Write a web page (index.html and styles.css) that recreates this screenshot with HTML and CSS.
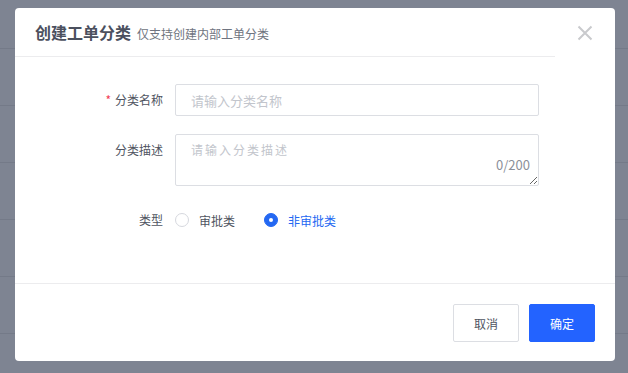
FILE: index.html
```html
<!DOCTYPE html>
<html lang="zh-CN">
<head>
    <meta charset="UTF-8">
    <meta name="viewport" content="width=device-width, initial-scale=1.0">
    <title>创建工单分类</title>
    <link rel="stylesheet" href="styles.css">
</head>
<body>
    <div class="modal">
        <div class="modal-header">
            <div class="modal-title">
                <span class="title-main">创建工单分类</span>
                <span class="title-sub">仅支持创建内部工单分类</span>
            </div>
            <div class="modal-close">
                <svg width="16" height="16" viewBox="0 0 16 16">
                    <path d="M1.5 1.5 L14.5 14.5 M14.5 1.5 L1.5 14.5" stroke="#c9cacd" stroke-width="2" fill="none"/>
                </svg>
            </div>
        </div>

        <div class="modal-body">
            <div class="form-row">
                <label class="form-label" for="name"><span class="required">*</span>分类名称</label>
                <input class="form-input" type="text" id="name" placeholder="请输入分类名称">
            </div>
            <div class="form-row">
                <label class="form-label" for="desc">分类描述</label>
                <div class="textarea-wrap">
                    <textarea class="form-textarea" id="desc" placeholder="请输入分类描述"></textarea>
                    <span class="counter">0/200</span>
                </div>
            </div>
            <div class="form-row radio-row">
                <span class="form-label">类型</span>
                <label class="radio">
                    <span class="radio-dot"></span>
                    <span>审批类</span>
                </label>
                <label class="radio checked">
                    <span class="radio-dot"></span>
                    <span>非审批类</span>
                </label>
            </div>
        </div>

        <div class="modal-footer">
            <button class="btn">取消</button>
            <button class="btn btn-primary">确定</button>
        </div>
    </div>
</body>
</html>
```

FILE: styles.css
```css
body {
    margin: 0;
    height: 373px;
    overflow: hidden;
    font-family: "Noto Sans CJK SC", "Noto Sans", sans-serif;
    background-color: #7e8492;
    background-image: repeating-linear-gradient(to bottom, transparent 0, transparent 48px, #747a88 48px, #747a88 49px, transparent 49px, transparent 57px);
    background-position: 0 0;
    padding-top: 8px;
    box-sizing: border-box;
}
.modal {
    margin-left: 15px;
    width: 600px;
    height: 353px;
    background: #fff;
    border-radius: 4px;
    display: flex;
    flex-direction: column;
}
.modal-header {
    display: flex;
    height: 49px;
}
.modal-title {
    width: 520px;
    padding-left: 20px;
    border-bottom: 1px solid #ececee;
    display: flex;
    align-items: center;
    gap: 6px;
}
.title-main {
    font-size: 16px;
    font-weight: bold;
    color: #4b505e;
}
.title-sub {
    font-size: 12px;
    color: #6f7480;
    padding-top: 2px;
}
.modal-close {
    flex: 1;
    display: flex;
    align-items: center;
    justify-content: flex-end;
    padding-right: 22px;
    padding-top: 1px;
}
.modal-body {
    flex: 1;
    padding-top: 27px;
    border-bottom: 1px solid #ececee;
}
.form-row {
    display: flex;
    align-items: flex-start;
    margin-bottom: 18px;
}
.form-label {
    width: 148px;
    text-align: right;
    padding-right: 12px;
    font-size: 12px;
    color: #4f5461;
    line-height: 32px;
    flex-shrink: 0;
}
.required {
    color: #f23c57;
    margin-right: 4px;
}
.form-input {
    width: 364px;
    height: 32px;
    box-sizing: border-box;
    border: 1px solid #dcdee3;
    border-radius: 2px;
    padding: 0 15px;
    font-family: inherit;
    font-size: 13px;
    outline: none;
}
.form-input::placeholder {
    color: #c2c5cc;
}
.textarea-wrap {
    position: relative;
    width: 364px;
    height: 52px;
}
.form-textarea {
    width: 100%;
    height: 100%;
    box-sizing: border-box;
    border: 1px solid #dcdee3;
    border-radius: 2px;
    padding: 6px 15px;
    font-family: inherit;
    font-size: 12px;
    letter-spacing: 2px;
    outline: none;
    resize: vertical;
    margin: 0;
    display: block;
}
.form-textarea::placeholder {
    color: #c2c5cc;
}
.counter {
    position: absolute;
    right: 9px;
    bottom: 12px;
    font-size: 13px;
    color: #8b909a;
}
.radio-row {
    align-items: center;
    margin-top: 24px;
}
.radio-row .form-label {
    line-height: 20px;
}
.radio {
    display: flex;
    align-items: center;
    font-size: 12px;
    color: #4f5461;
    margin-right: 29px;
}
.radio-dot {
    width: 14px;
    height: 14px;
    box-sizing: border-box;
    border: 1px solid #d6d8de;
    border-radius: 50%;
    margin-right: 10px;
    position: relative;
}
.radio.checked {
    color: #2468f2;
}
.radio.checked .radio-dot {
    background: #2468f2;
    border-color: #2468f2;
}
.radio.checked .radio-dot::after {
    content: "";
    position: absolute;
    left: 4px;
    top: 4px;
    width: 4px;
    height: 4px;
    border-radius: 50%;
    background: #fff;
}
.modal-footer {
    height: 77px;
    display: flex;
    justify-content: flex-end;
    align-items: flex-start;
    padding: 20px 20px 0 0;
    box-sizing: border-box;
    gap: 10px;
}
.btn {
    width: 66px;
    height: 38px;
    border: 1px solid #dcdee3;
    background: #fff;
    border-radius: 2px;
    font-family: inherit;
    font-size: 12px;
    color: #4f5461;
    cursor: pointer;
}
.btn-primary {
    background: #2363ff;
    border-color: #2363ff;
    color: #fff;
}
```
